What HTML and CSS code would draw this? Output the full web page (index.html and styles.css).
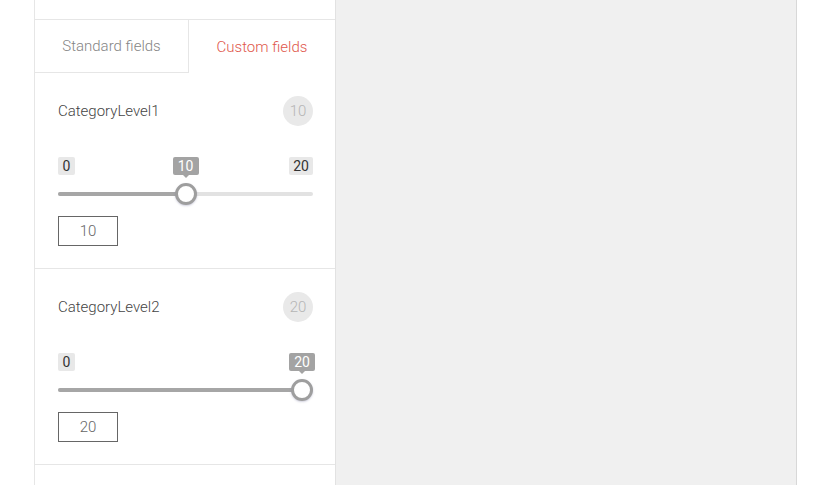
FILE: index.html
```html
<!DOCTYPE html>
<html>
<head>
<meta charset="utf-8">
<link rel="stylesheet" href="styles.css">
</head>
<body>
<div class="page">
  <div class="gutter"></div>
  <aside class="panel">
    <div class="panel-top"></div>
    <div class="tabs">
      <div class="tab">Standard fields</div>
      <div class="tab active">Custom fields</div>
    </div>
    <section class="field">
      <div class="field-head">
        <span class="field-title">CategoryLevel1</span>
        <span class="badge">10</span>
      </div>
      <div class="slider">
        <div class="limits">
          <span class="limit">0</span>
          <span class="limit">20</span>
        </div>
        <div class="track">
          <div class="rail"></div>
          <div class="fill" style="width: calc(11px + (100% - 22px) * 0.5)"></div>
          <div class="tip" style="left: calc(11px + (100% - 22px) * 0.5)">10</div>
          <div class="thumb" style="left: calc((100% - 22px) * 0.5)"></div>
        </div>
      </div>
      <div class="value-box">10</div>
    </section>
    <section class="field">
      <div class="field-head">
        <span class="field-title">CategoryLevel2</span>
        <span class="badge">20</span>
      </div>
      <div class="slider">
        <div class="limits">
          <span class="limit">0</span>
        </div>
        <div class="track">
          <div class="rail"></div>
          <div class="fill" style="width: calc(11px + (100% - 22px) * 1)"></div>
          <div class="tip" style="left: calc(11px + (100% - 22px) * 1)">20</div>
          <div class="thumb" style="left: calc((100% - 22px) * 1)"></div>
        </div>
      </div>
      <div class="value-box">20</div>
    </section>
  </aside>
  <main class="canvas"></main>
</div>
</body>
</html>
```

FILE: styles.css
```css
* { box-sizing: border-box; }
html, body {
  margin: 0;
  padding: 0;
  background: #ffffff;
  font-family: Roboto, "Liberation Sans", sans-serif;
}
.page {
  display: flex;
  height: 485px;
  overflow: hidden;
}
.gutter {
  width: 34px;
  flex: none;
}
.panel {
  width: 301px;
  flex: none;
  border-left: 1px solid #e6e6e6;
  background: #fff;
}
.panel-top {
  height: 20px;
  border-bottom: 1px solid #e6e6e6;
}
.tabs {
  display: flex;
  height: 53px;
}
.tab {
  display: flex;
  align-items: center;
  justify-content: center;
  font-size: 15px;
  font-weight: 300;
  color: #858585;
}
.tab:first-child {
  width: 154px;
  border-right: 1px solid #e6e6e6;
  border-bottom: 1px solid #e6e6e6;
}
.tab.active {
  flex: 1;
  color: #e0574c;
}
.field {
  padding: 23px 22px 22px 23px;
  border-bottom: 1px solid #e6e6e6;
}
.field-head {
  display: flex;
  align-items: center;
  justify-content: space-between;
  height: 30px;
}
.field-title {
  font-size: 15px;
  font-weight: 300;
  color: #444;
}
.badge {
  width: 30px;
  height: 30px;
  border-radius: 50%;
  background: #e9e9e9;
  color: #b5b5b5;
  font-size: 15px;
  font-weight: 300;
  display: flex;
  align-items: center;
  justify-content: center;
}
.slider {
  margin-top: 31px;
}
.limits {
  display: flex;
  justify-content: space-between;
  height: 18px;
}
.limit {
  background: #e8e8e8;
  color: #333;
  font-size: 14px;
  line-height: 18px;
  padding: 0 4px;
  border-radius: 2px;
  min-width: 17px;
  text-align: center;
}
.track {
  position: relative;
  height: 22px;
  margin-top: 8px;
}
.rail {
  position: absolute;
  left: 0;
  right: 0;
  top: 9px;
  height: 4px;
  border-radius: 2px;
  background: #e2e2e2;
}
.fill {
  position: absolute;
  left: 0;
  top: 9px;
  height: 4px;
  border-radius: 2px;
  background: #a6a6a6;
}
.thumb {
  position: absolute;
  top: 0;
  width: 22px;
  height: 22px;
  border-radius: 50%;
  background: #fff;
  border: 3px solid #9e9e9e;
  box-shadow: 0 1px 2px rgba(120, 120, 160, 0.35);
}
.tip {
  position: absolute;
  top: -26px;
  transform: translateX(-50%);
  background: #a3a3a3;
  color: #fff;
  font-size: 14px;
  line-height: 18px;
  padding: 0 4px;
  border-radius: 2px;
  min-width: 26px;
  text-align: center;
}
.tip::after {
  content: "";
  position: absolute;
  left: 50%;
  bottom: -3px;
  margin-left: -3px;
  border-left: 3px solid transparent;
  border-right: 3px solid transparent;
  border-top: 3px solid #a3a3a3;
}
.value-box {
  margin-top: 11px;
  width: 60px;
  height: 30px;
  border: 1px solid #666;
  display: flex;
  align-items: center;
  justify-content: center;
  font-size: 15px;
  font-weight: 300;
  color: #666;
}
.canvas {
  width: 462px;
  flex: none;
  background: #f0f0f0;
  border-left: 1px solid #e2e2e2;
  border-right: 1px solid #d8d8d8;
}
```
